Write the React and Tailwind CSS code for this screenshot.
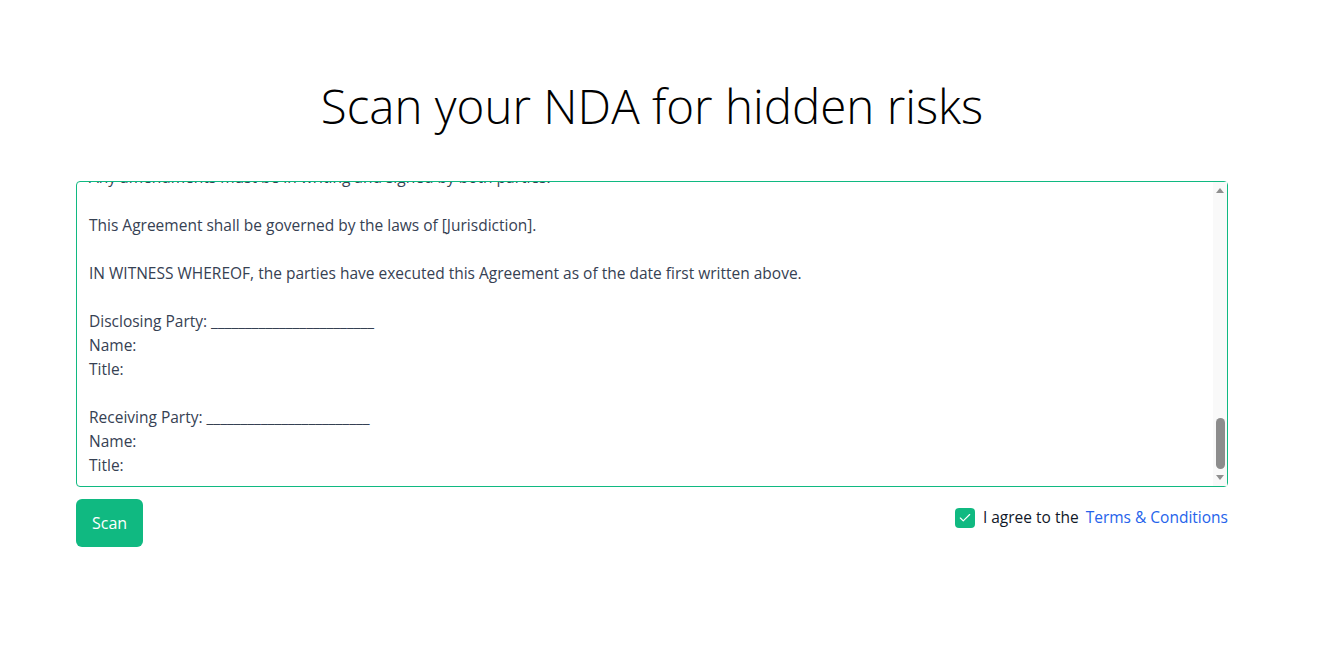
import React, { useEffect, useRef, useState } from 'react';
import { Check } from 'lucide-react';

const line = '________________________';

const sampleNda = `MUTUAL NON-DISCLOSURE AGREEMENT

This Non-Disclosure Agreement (the "Agreement") is entered into as of [Date] by and between [Disclosing Party], with its principal offices at [Address] ("Disclosing Party"), and [Receiving Party], located at [Address] ("Receiving Party").

1. Definition of Confidential Information. For purposes of this Agreement, "Confidential Information" shall include all information or material that has or could have commercial value or other utility in the business in which Disclosing Party is engaged.

2. Exclusions from Confidential Information. Receiving Party's obligations under this Agreement do not extend to information that is publicly known at the time of disclosure or subsequently becomes publicly known through no fault of the Receiving Party.

3. Obligations of Receiving Party. Receiving Party shall hold and maintain the Confidential Information in strictest confidence for the sole and exclusive benefit of the Disclosing Party.

4. Time Periods. The nondisclosure provisions of this Agreement shall survive the termination of this Agreement and Receiving Party's duty to hold Confidential Information in confidence shall remain in effect until the Confidential Information no longer qualifies as a trade secret.

5. Relationships. Nothing contained in this Agreement shall be deemed to constitute either party a partner, joint venturer or employee of the other party for any purpose.

6. Severability. If a court finds any provision of this Agreement invalid or unenforceable, the remainder of this Agreement shall be interpreted so as best to effect the intent of the parties.

7. Integration. This Agreement expresses the complete understanding of the parties with respect to the subject matter and supersedes all prior proposals, agreements, representations and understandings.

Any amendments must be in writing and signed by both parties.

This Agreement shall be governed by the laws of [Jurisdiction].

IN WITNESS WHEREOF, the parties have executed this Agreement as of the date first written above.

Disclosing Party: ${line}
Name:
Title:

Receiving Party: ${line}
Name:
Title:`;

const App = () => {
  const [text, setText] = useState(sampleNda);
  const [agreed, setAgreed] = useState(true);
  const areaRef = useRef(null);

  useEffect(() => {
    if (areaRef.current) {
      areaRef.current.scrollTop = areaRef.current.scrollHeight;
    }
  }, []);

  return (
    <div className="min-h-screen bg-white pt-[82px] font-['Open_Sans',sans-serif]">
      <div className="w-[1152px] ml-[76px]">
        {/* Header */}
        <h1 className="text-center text-[47.5px] leading-[48px] font-light text-black mb-[51px]">
          Scan your NDA for hidden risks
        </h1>

        {/* NDA input */}
        <div className="relative">
          <textarea
            ref={areaRef}
            value={text}
            onChange={(e) => setText(e.target.value)}
            className="block w-full h-[306px] resize-none rounded border border-[#10b981] pl-3 pr-6 pt-[7px] pb-[9px] text-[15.5px] leading-6 text-gray-700 focus:outline-none [scrollbar-width:none]"
          />
          {/* scrollbar */}
          <div className="pointer-events-none absolute right-[1px] top-[1px] bottom-[1px] flex w-[14px] flex-col items-center bg-[#f9f9f9]">
            <div className="mt-[6px] h-0 w-0 border-x-[4px] border-b-[5px] border-x-transparent border-b-[#8f8f8f]" />
            <div className="flex-1" />
            <div className="mb-[6px] h-[51px] w-[9px] rounded-full bg-[#8c8c8c]" />
            <div className="mb-[6px] h-0 w-0 border-x-[4px] border-t-[5px] border-x-transparent border-t-[#8f8f8f]" />
          </div>
        </div>

        {/* Actions */}
        <div className="mt-3 flex items-start justify-between">
          <button className="h-12 rounded-md bg-[#10b981] px-4 text-base text-white hover:bg-[#059669]">
            Scan
          </button>

          <label className="mt-[7px] flex h-6 items-center gap-2 text-[15.5px] cursor-pointer">
            <button
              type="button"
              onClick={() => setAgreed(!agreed)}
              className={`flex h-5 w-5 items-center justify-center rounded ${
                agreed ? 'bg-[#10b981]' : 'border border-gray-300 bg-white'
              }`}
            >
              {agreed && <Check className="h-[14px] w-[14px] text-white" strokeWidth={2} />}
            </button>
            <span className="text-gray-900">
              I agree to the{' '}
              <a href="#" className="ml-[3px] text-[#2563eb] hover:underline">
                Terms &amp; Conditions
              </a>
            </span>
          </label>
        </div>
      </div>
    </div>
  );
};

export default App;
